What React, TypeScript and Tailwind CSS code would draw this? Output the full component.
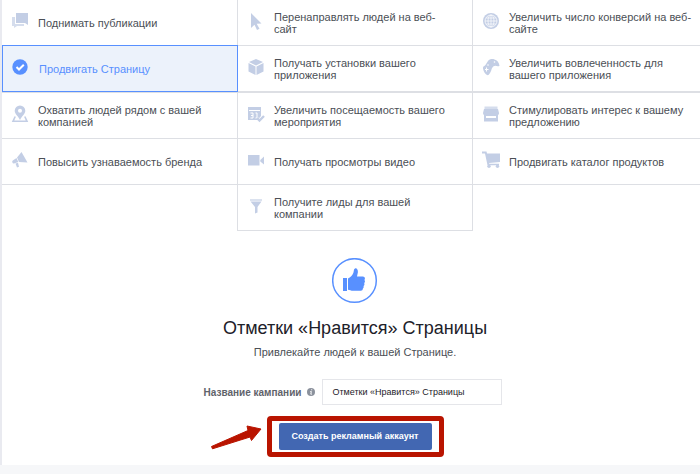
import React, { useState } from "react";

type Objective = {
  id: string;
  // "\n" marks where the title breaks inside its tile
  title: string;
  icon: React.ReactNode;
};

const objectives: Objective[] = [
  {
    id: "posts",
    title: "Поднимать публикации",
    icon: (
      <>
        <path d="M1 5h3v7h9v2H6l-3 2v-2H1z" opacity=".7" />
        <path d="M5 1h12v12l-3-2H5z" />
      </>
    ),
  },
  {
    id: "website",
    title: "Перенаправлять людей на веб-\nсайт",
    icon: <path d="M4 1l10.500 10.500-4.800.2 2.800 5-2.500 1.200-2.500-5.100L4 16z" />,
  },
  {
    id: "conversions",
    title: "Увеличить число конверсий на веб-\nсайте",
    icon: (
      <>
        <circle cx="9" cy="9" r="8" />
        <g fill="none" stroke="#fff" strokeWidth=".7">
          <circle cx="9" cy="9" r="6" />
          <ellipse cx="9" cy="9" rx="3" ry="6" />
          <path d="M9 3v12M3 9h12M4 6h10M4 12h10" />
        </g>
      </>
    ),
  },
  {
    id: "page",
    title: "Продвигать Страницу",
    icon: (
      <>
        <circle cx="9" cy="9" r="7.700" fill="#5890ff" />
        <path d="M5.500 9l2.500 2.500 4.800-4.800" fill="none" stroke="#fff" strokeWidth="2" />
      </>
    ),
  },
  {
    id: "installs",
    title: "Получать установки вашего\nприложения",
    icon: (
      <>
        <path d="M9 1l7 3-7 3.500L2 4z" />
        <path d="M1.500 5L8.500 8.500V17l-7-3.500zM16.500 5L9.500 8.500V17l7-3.500z" />
      </>
    ),
  },
  {
    id: "engagement",
    title: "Увеличить вовлеченность для\nвашего приложения",
    icon: (
      <>
        <path d="M6 3C7.500 1 10.500.5 12.500 1.500c2.500.5 4.500 3 5 6.200-1.500 1.300-2.800.3-4.200.1-1.200 0-2.400.8-3 2-.8 1-.7 2-1.300 3.300-.7 1.500-1.600 4-3.500 4.200C3.300 16.500 1.500 13.500 1 10.500c-.2-1.500.6-2.500 1.800-2.800C4 6.500 4.800 4.500 6 3z" />
        <g fill="#fff">
          <circle cx="12.500" cy="4" r=".8" />
          <circle cx="6" cy="7" r=".8" />
          <path d="M4 9.500h1V11h1.500v1H5v1.500H4V12H3v-1h1z" />
        </g>
      </>
    ),
  },
  {
    id: "local",
    title: "Охватить людей рядом с вашей\nкомпанией",
    icon: (
      <>
        <path
          fillRule="evenodd"
          d="M9 .5a5.300 5.300 0 0 1 5.300 5.300c0 3.200-3.800 5.700-5.300 9.200-1.500-3.500-5.300-6-5.300-9.200A5.300 5.300 0 0 1 9 .5zm0 3.300a2 2 0 1 0 0 4 2 2 0 0 0 0-4z"
        />
        <path d="M4.200 11.500L2 16.300h14l-2.200-4.800" fill="none" stroke="currentColor" strokeWidth="1.600" />
      </>
    ),
  },
  {
    id: "event",
    title: "Увеличить посещаемость вашего\nмероприятия",
    icon: (
      <>
        <path fillRule="evenodd" d="M1 2h13v9l-3.500 4H1zm1 3v1h11V5z" />
        <path d="M3.500 8H6v5H3.500M4 10.500h2M8.500 8H10v5M8.500 13h3" fill="none" stroke="#fff" />
        <path d="M10 13l2.500 2.500L17 11" fill="none" stroke="currentColor" strokeWidth="2.400" />
      </>
    ),
  },
  {
    id: "offer",
    title: "Стимулировать интерес к вашему\nпредложению",
    icon: (
      <>
        <path d="M2.500 1.500h13V4h-13z" opacity=".7" />
        <path d="M2 4h14l1 4c0 1.500-1 2-1 2H2S1 9.500 1 8z" />
        <path fillRule="evenodd" d="M2 9.500h14v7H2zm2 1.500v2h10v-2z" />
      </>
    ),
  },
  {
    id: "brand",
    title: "Повысить узнаваемость бренда",
    icon: (
      <>
        <path d="M10.500 1L16.500 11.500 8 11 6 6.500z" />
        <path d="M5.500 7l1.800 4L3 12.500c-1.500.3-2.500-2-1.200-3zM4.500 12.500l2.500-.7 1 4-2 .7z" />
      </>
    ),
  },
  {
    id: "video",
    title: "Получать просмотры видео",
    icon: <path d="M1 4h11.500v10.500H1zM13.300 9L17 5.500v8l-3.700-3z" />,
  },
  {
    id: "catalog",
    title: "Продвигать каталог продуктов",
    icon: (
      <>
        <path d="M0 .5h4.500L5 2.500h13v8.500L7 12l.3.800H17V14.300H5.500L3 2.500H0z" />
        <circle cx="7" cy="15.300" r="1.700" />
        <circle cx="15.500" cy="15.300" r="1.700" />
      </>
    ),
  },
  {
    id: "leads",
    title: "Получите лиды для вашей\nкомпании",
    icon: (
      <>
        <path d="M3 2h12v2H3z" opacity=".6" />
        <path d="M3.500 4.500h11l-4 5.500v5.500l-2.500 1V10z" />
      </>
    ),
  },
];

const rows = [
  objectives.slice(0, 3),
  objectives.slice(3, 6),
  objectives.slice(6, 9),
  objectives.slice(9, 12),
];

const rowGrid = "grid grid-cols-[236fr_235fr_227fr]";

const ObjectiveButton: React.FC<{
  item: Objective;
  selected: boolean;
  onSelect: (id: string) => void;
}> = ({ item, selected, onSelect }) => (
  <button
    type="button"
    aria-pressed={selected}
    onClick={() => onSelect(item.id)}
    className={
      selected
        ? "relative z-10 -mt-px -mr-px -mb-px flex h-[47px] grow items-center gap-[10px] border border-[#5890ff] bg-[#ecf2fb] pl-2 text-left text-[#5890ff]"
        : "flex h-[45px] grow items-center gap-[9px] pl-[9px] text-left text-[#4b4f56]"
    }
  >
    <svg viewBox="0 0 18 18" className="mb-1 size-[18px] shrink-0 fill-current text-[#c3cee5]">
      {item.icon}
    </svg>
    <span className="text-[11px] leading-3 whitespace-pre-line">{item.title}</span>
  </button>
);

export const App: React.FC = () => {
  const [selected, setSelected] = useState("page");
  const [name, setName] = useState("Отметки «Нравится» Страницы");

  const renderButton = (item: Objective) => (
    <ObjectiveButton item={item} selected={item.id === selected} onSelect={setSelected} />
  );

  return (
    <div className="min-h-screen bg-[#f6f7f9] font-['Liberation_Sans',Arial,sans-serif]">
      <main className="border-l-2 border-[#e9eaf0] bg-white pb-2">
        {rows.map((row, r) => (
          <div key={r} className={rowGrid}>
            {row.map((item, c) => (
              <div
                key={item.id}
                className={`flex items-start border-[#dddfe4] ${r === 1 ? "border-b-2" : "border-b"} ${
                  c < 2 ? "border-r" : ""
                }`}
              >
                {renderButton(item)}
              </div>
            ))}
          </div>
        ))}
        <div className={rowGrid}>
          <div className="border-r border-[#dddfe4]" />
          <div className="flex border-r border-b border-[#dddfe4]">
            {renderButton(objectives[12])}
          </div>
        </div>

        <section className="flex flex-col items-center pt-[27px] pl-2">
          <svg viewBox="0 0 46 46" className="size-[46px]" fill="#5890ff">
            <circle cx="22.500" cy="22.500" r="21.800" fill="none" stroke="#5890ff" strokeWidth="1.500" />
            <path d="M11 20h4v13h-4z" />
            <path d="M16 20.500c2.500-1.200 4.300-3.200 5.300-5.500.7-1.600.2-4 1.700-4.600 2-.4 3.100 1.600 2.900 3.800L25 18.500h6c2 0 2.500 2.300 1.400 3.400.9 1 .7 2.300-.3 3.100.7 1.100.4 2.400-.6 3.100.5 1 .1 2.100-.7 2.600.1 1.100-.8 2-2 2H21c-2 0-3.200-.7-5-1z" />
          </svg>
          <h1 className="mt-3 text-[18px] leading-6 text-[#1d2129]">Отметки «Нравится» Страницы</h1>
          <p className="mt-1 text-[11px] leading-4 text-[#4b4f56]">
            Привлекайте людей к вашей Странице.
          </p>

          <div className="mt-[19px] flex items-center pr-1">
            <label htmlFor="campaign" className="text-[10px] font-bold text-[#5f636b]">
              Название кампании
            </label>
            <svg viewBox="0 0 8 8" className="mr-[7px] ml-[6px] size-2">
              <circle cx="4" cy="4" r="4" fill="#8b919c" />
              <path d="M4.700 1.300v1M3.300 3.500h1l-.5 2.700h1" fill="none" stroke="#fff" />
            </svg>
            <input
              id="campaign"
              type="text"
              value={name}
              onChange={(e) => setName(e.target.value)}
              className="h-[26px] w-[180px] border border-[#e5e6ea] bg-white px-[9px] text-[9px] text-[#1d2129] outline-none"
            />
          </div>

          <div className="relative mt-[11px] rounded-sm border-[5px] border-[#b91400] px-[7px] py-[2px]">
            <button
              type="button"
              className="block h-[27px] w-[153px] rounded-xs bg-[#4267b2] text-[9px] font-bold text-white"
            >
              Создать рекламный аккаунт
            </button>
            <svg
              viewBox="0 0 52 26"
              className="absolute top-[3px] right-full mr-[10px] h-[26px] w-[52px]"
              fill="#b91400"
              stroke="#b91400"
              strokeLinejoin="round"
            >
              <path d="M1.500 22.500L38 6.500 37 2 51 5 41.500 16.500 40 13 2.500 24.800z" />
            </svg>
          </div>
        </section>
      </main>
    </div>
  );
};

export default App;
